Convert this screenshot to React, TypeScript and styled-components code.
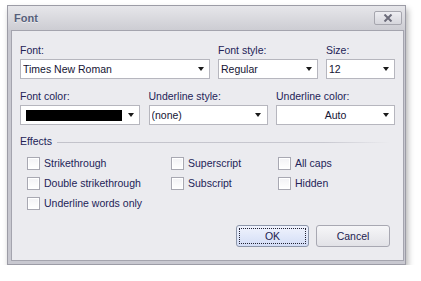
import React from 'react';
import styled, { createGlobalStyle } from 'styled-components';

const GlobalStyle = createGlobalStyle`
  html, body {
    margin: 0;
    padding: 0;
    background: #ffffff;
  }
  body {
    font-family: 'Liberation Sans', Arial, sans-serif;
    font-size: 10.5px;
    color: #232357;
  }
`;

const Page = styled.div`
  padding: 5px 0 0 7px;
`;

const Window = styled.div`
  width: 399px;
  height: 260px;
  box-sizing: border-box;
  border: 1px solid #9c9ca6;
  background: #c8c8d0;
  display: flex;
  flex-direction: column;
  padding: 0 1px 3px 3px;
  box-shadow: 2px 4px 6px rgba(0, 0, 0, 0.3);
`;

const TitleBar = styled.div`
  height: 24px;
  margin: 0 -1px 0 -3px;
  padding: 0 3px 0 6px;
  display: flex;
  align-items: center;
  justify-content: space-between;
  background: linear-gradient(#e6e6ea, #cdcdd3);
`;

const Title = styled.span`
  font-weight: bold;
  font-size: 11px;
  color: #56607a;
  text-shadow: 0 1px 0 rgba(255, 255, 255, 0.6);
`;

const CloseButton = styled.div`
  width: 28px;
  height: 14px;
  box-sizing: border-box;
  border: 1px solid #a6a6ae;
  border-radius: 2px;
  background: linear-gradient(#eeeef2, #d6d6dc);
  display: flex;
  align-items: center;
  justify-content: center;
`;

const Content = styled.div`
  flex: 1;
  border: 1px solid #a4a4ae;
  background: #ebebef;
  padding: 13px 8px 0 8px;
  display: flex;
  flex-direction: column;
`;

const FieldRow = styled.div<{ $gapTop?: number }>`
  display: flex;
  justify-content: space-between;
  margin-top: ${(p) => p.$gapTop ?? 0}px;
`;

const Field = styled.div<{ $width: number }>`
  width: ${(p) => p.$width}px;
  display: flex;
  flex-direction: column;
  gap: 2px;
`;

const Label = styled.span`
  line-height: 13px;
  white-space: nowrap;
`;

const Combo = styled.div<{ $center?: boolean }>`
  height: 20px;
  box-sizing: border-box;
  border: 1px solid #b6b6be;
  background: #ffffff;
  display: flex;
  align-items: center;
  padding-left: ${(p) => (p.$center ? 0 : 2)}px;
`;

const ComboText = styled.span<{ $center?: boolean }>`
  flex: 1;
  line-height: 18px;
  color: #141433;
  text-align: ${(p) => (p.$center ? 'center' : 'left')};
  padding-left: ${(p) => (p.$center ? 17 : 0)}px;
  white-space: nowrap;
  overflow: hidden;
`;

const Swatch = styled.span`
  flex: 1;
  height: 11px;
  margin-left: 3px;
  background: #000000;
`;

const ArrowBox = styled.span`
  width: 17px;
  display: flex;
  align-items: center;
  justify-content: center;
`;

const Arrow = styled.span`
  width: 0;
  height: 0;
  border-left: 3.5px solid transparent;
  border-right: 3.5px solid transparent;
  border-top: 4px solid #1a1a1a;
`;

const GroupHeader = styled.div`
  margin-top: 10px;
  display: flex;
  align-items: center;
  gap: 5px;
  line-height: 13px;
`;

const GroupLine = styled.span`
  flex: 1;
  height: 1px;
  margin-top: 2px;
  margin-right: 5px;
  background: linear-gradient(to right, #c2c2ca 0%, #c8c8d0 80%, rgba(200, 200, 208, 0) 100%);
`;

const CheckGrid = styled.div`
  margin-top: 5px;
  padding-left: 7px;
  display: grid;
  grid-template-columns: 144px 107px 1fr;
  grid-auto-rows: 20px;
`;

const CheckItem = styled.label`
  display: flex;
  align-items: center;
  gap: 4px;
  white-space: nowrap;
`;

const CheckBox = styled.span`
  width: 13px;
  height: 13px;
  box-sizing: border-box;
  border: 1px solid #a8a8b2;
  background: linear-gradient(#f2f2f5, #ffffff);
  box-shadow: inset 0 0 0 1px #ffffff;
`;

const ButtonRow = styled.div`
  margin-top: 12px;
  padding-right: 5px;
  display: flex;
  justify-content: flex-end;
  gap: 7px;
`;

const Button = styled.div<{ $focused?: boolean }>`
  width: ${(p) => (p.$focused ? 73 : 74)}px;
  height: 22px;
  box-sizing: border-box;
  border: 1px solid ${(p) => (p.$focused ? '#8d96aa' : '#a8a8b2')};
  border-radius: 3px;
  background: ${(p) =>
    p.$focused
      ? 'linear-gradient(#f0f3fd, #d3ddf6)'
      : 'linear-gradient(#f6f6f8, #e2e2e7)'};
  padding: 2px;
  display: flex;
`;

const ButtonFace = styled.span<{ $focused?: boolean }>`
  flex: 1;
  display: flex;
  align-items: center;
  justify-content: center;
  border: 1px dotted ${(p) => (p.$focused ? '#222233' : 'transparent')};
  color: #1c1c50;
`;

type Check = { label: string };

const checks: Check[] = [
  { label: 'Strikethrough' },
  { label: 'Superscript' },
  { label: 'All caps' },
  { label: 'Double strikethrough' },
  { label: 'Subscript' },
  { label: 'Hidden' },
  { label: 'Underline words only' },
];

const DropArrow = () => (
  <ArrowBox>
    <Arrow />
  </ArrowBox>
);

export default function App() {
  return (
    <>
      <GlobalStyle />
      <Page>
        <Window>
          <TitleBar>
            <Title>Font</Title>
            <CloseButton>
              <svg width="10" height="8" viewBox="0 0 10 8">
                <path d="M1.5 0.5 L8.5 7.5 M8.5 0.5 L1.5 7.5" stroke="#6c6c7a" strokeWidth="2" />
              </svg>
            </CloseButton>
          </TitleBar>
          <Content>
            <FieldRow>
              <Field $width={190}>
                <Label>Font:</Label>
                <Combo>
                  <ComboText>Times New Roman</ComboText>
                  <DropArrow />
                </Combo>
              </Field>
              <Field $width={100}>
                <Label>Font style:</Label>
                <Combo>
                  <ComboText>Regular</ComboText>
                  <DropArrow />
                </Combo>
              </Field>
              <Field $width={69}>
                <Label>Size:</Label>
                <Combo>
                  <ComboText>12</ComboText>
                  <DropArrow />
                </Combo>
              </Field>
            </FieldRow>
            <FieldRow $gapTop={11}>
              <Field $width={120}>
                <Label>Font color:</Label>
                <Combo>
                  <Swatch />
                  <DropArrow />
                </Combo>
              </Field>
              <Field $width={119}>
                <Label>Underline style:</Label>
                <Combo>
                  <ComboText>(none)</ComboText>
                  <DropArrow />
                </Combo>
              </Field>
              <Field $width={119}>
                <Label>Underline color:</Label>
                <Combo $center>
                  <ComboText $center>Auto</ComboText>
                  <DropArrow />
                </Combo>
              </Field>
            </FieldRow>
            <GroupHeader>
              <span>Effects</span>
              <GroupLine />
            </GroupHeader>
            <CheckGrid>
              {checks.map((c) => (
                <CheckItem key={c.label}>
                  <CheckBox />
                  {c.label}
                </CheckItem>
              ))}
            </CheckGrid>
            <ButtonRow>
              <Button $focused>
                <ButtonFace $focused>OK</ButtonFace>
              </Button>
              <Button>
                <ButtonFace>Cancel</ButtonFace>
              </Button>
            </ButtonRow>
          </Content>
        </Window>
      </Page>
    </>
  );
}
